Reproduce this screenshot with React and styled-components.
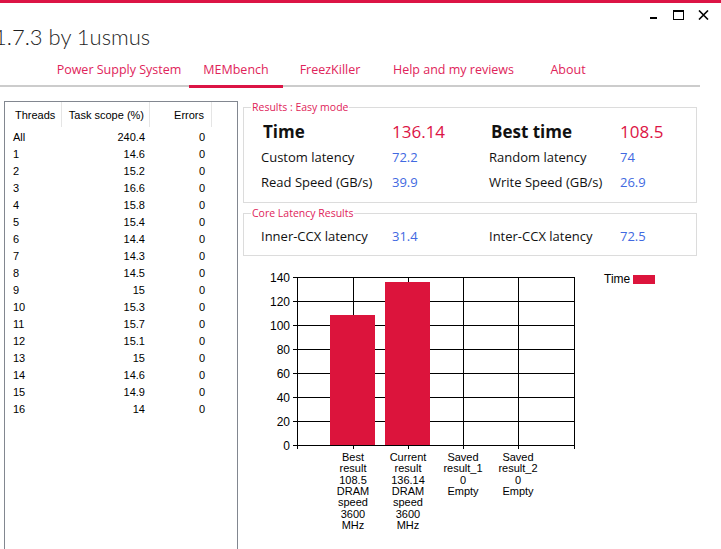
import React from 'react';
import styled, { createGlobalStyle } from 'styled-components';

const GlobalStyle = createGlobalStyle`
  html, body {
    margin: 0;
    padding: 0;
    background: #ffffff;
    overflow: hidden;
  }
  body {
    font-family: "Open Sans", "Noto Sans", sans-serif;
    color: #1a1a1a;
  }
`;

const Window = styled.div`
  width: 721px;
  height: 549px;
  overflow: hidden;
  border-top: 3px solid #dc1445;
  box-sizing: border-box;
`;

const TitleBar = styled.div`
  display: flex;
  justify-content: space-between;
  align-items: flex-start;
  height: 52px;
`;

const Title = styled.h1`
  margin: 19px 0 0 -6px;
  font-family: Lato, "Open Sans", sans-serif;
  font-size: 22px;
  font-weight: 300;
  line-height: 30px;
  color: #1f1f1f;
  white-space: nowrap;
`;

const Controls = styled.div`
  display: flex;
  align-items: center;
  margin: 6px 5px 0 0;
`;

const ControlButton = styled.div`
  width: 25px;
  height: 12px;
  display: flex;
  align-items: center;
  justify-content: center;
`;

const TabStrip = styled.nav`
  display: flex;
  width: 700px;
  height: 30px;
  border-bottom: 2px solid #cccccc;
`;

const Tab = styled.div`
  position: relative;
  width: ${p => p.$w}px;
  flex: none;
  display: flex;
  align-items: center;
  justify-content: center;
  padding-bottom: 1px;
  box-sizing: border-box;
  font-size: 12.5px;
  color: #e0245a;
  white-space: nowrap;

  &::after {
    content: '';
    display: ${p => (p.$active ? 'block' : 'none')};
    position: absolute;
    left: 0;
    right: 0;
    bottom: -3px;
    height: 3px;
    background: #dc1445;
  }
`;

const Main = styled.div`
  display: flex;
  align-items: flex-start;
  gap: 5px;
  padding: 14px 0 0 4px;
`;

const ThreadPanel = styled.div`
  width: 234px;
  height: 470px;
  box-sizing: border-box;
  border: 1px solid #828790;
  border-bottom: none;
  font-family: "Liberation Sans", Arial, sans-serif;
  font-size: 11px;
  color: #000;
`;

const TableRow = styled.div`
  display: grid;
  grid-template-columns: 57px 88px 62px;
  height: ${p => (p.$head ? 25 : 17)}px;
  align-items: center;
  margin-bottom: ${p => (p.$head ? 1 : 0)}px;
`;

const Cell = styled.div`
  height: 100%;
  display: flex;
  align-items: center;
  justify-content: ${p => (p.$right ? 'flex-end' : 'flex-start')};
  padding: ${p => p.$pad};
  box-sizing: border-box;
  border-right: ${p => (p.$head ? '1px solid #e5e5e5' : 'none')};
`;

const RightPanel = styled.div`
  width: 454px;
  display: flex;
  flex-direction: column;
`;

const Group = styled.fieldset`
  margin: ${p => p.$top}px 0 0 0;
  padding: 0;
  border: 1px solid #dcdcdc;
  min-width: 0;

  legend {
    margin-left: 7px;
    padding: 0 1px;
    font-size: 10.5px;
    line-height: 13px;
    color: #e0245a;
  }
`;

const ResultGrid = styled.div`
  display: grid;
  grid-template-columns: 131px 97px 131px auto;
  grid-auto-rows: 25px;
  align-items: center;
  padding: ${p => p.$pad};
`;

const Label = styled.span`
  font-size: ${p => (p.$big ? 17 : 13)}px;
  font-weight: ${p => (p.$big ? 700 : 400)};
  color: #111;
  white-space: nowrap;
  padding-left: ${p => (p.$big ? 2 : 0)}px;
`;

const Value = styled.span`
  font-size: ${p => (p.$big ? 17 : 13)}px;
  color: ${p => (p.$big ? '#dc1445' : '#4169e1')};
  white-space: nowrap;
`;

const ChartSvg = styled.svg`
  display: block;
  margin-top: 6px;
  font-family: "Liberation Sans", Arial, sans-serif;
`;

const rows = [
  ['All', '240.4'], ['1', '14.6'], ['2', '15.2'], ['3', '16.6'], ['4', '15.8'],
  ['5', '15.4'], ['6', '14.4'], ['7', '14.3'], ['8', '14.5'], ['9', '15'],
  ['10', '15.3'], ['11', '15.7'], ['12', '15.1'], ['13', '15'], ['14', '14.6'],
  ['15', '14.9'], ['16', '14'],
];

const tabs = [
  { label: 'Power Supply System', w: 140 },
  { label: 'MEMbench', w: 94, active: true },
  { label: 'FreezKiller', w: 94 },
  { label: 'Help and my reviews', w: 153 },
  { label: 'About', w: 76 },
];

const bars = [
  { x: 353, value: 108.5, label: ['Best', 'result', '108.5', 'DRAM', 'speed', '3600', 'MHz'] },
  { x: 408, value: 136.14, label: ['Current', 'result', '136.14', 'DRAM', 'speed', '3600', 'MHz'] },
  { x: 463, value: 0, label: ['Saved', 'result_1', '0', 'Empty'] },
  { x: 518, value: 0, label: ['Saved', 'result_2', '0', 'Empty'] },
];

// plot area in page coordinates
const PL = 297, PR = 574, PT = 277, PB = 445, STEP = 24;

const Chart = () => (
  <ChartSvg width={458} height={285}>
    <g transform="translate(-243,-262)" shapeRendering="crispEdges">
      {[0, 1, 2, 3, 4, 5, 6, 7].map(i => (
        <g key={i}>
          <line x1={PL - 4} x2={PR} y1={PB - i * STEP + 0.5} y2={PB - i * STEP + 0.5} stroke="#000" />
          <text x={290} y={PB - i * STEP + 5} fontSize="12" textAnchor="end" fill="#000">{i * 20}</text>
        </g>
      ))}
      {[PL, 353, 408, 463, 518, PR].map(x => (
        <line key={x} x1={x + 0.5} x2={x + 0.5} y1={PT} y2={PB + 4} stroke="#000" />
      ))}
      {bars.map(b => b.value > 0 && (
        <rect key={b.x} x={b.x - 23} width={45} y={PB - b.value * 1.2} height={b.value * 1.2} fill="#dc143c" />
      ))}
      {bars.map(b => (
        <text key={'l' + b.x} x={b.x} fontSize="11" textAnchor="middle" fill="#000">
          {b.label.map((t, i) => (
            <tspan key={i} x={b.x} y={461 + i * 11.33}>{t}</tspan>
          ))}
        </text>
      ))}
      <text x={604} y={283} fontSize="12" fill="#000">Time</text>
      <rect x={633} y={275} width={22} height={9} fill="#dc143c" />
    </g>
  </ChartSvg>
);

export default function App() {
  return (
    <Window>
      <GlobalStyle />
      <TitleBar>
        <Title>1.7.3 by 1usmus</Title>
        <Controls>
          <ControlButton>
            <svg width="8" height="10" viewBox="0 0 8 10"><rect x="0" y="7" width="7" height="2" fill="#000" /></svg>
          </ControlButton>
          <ControlButton>
            <svg width="11" height="10" viewBox="0 0 11 10"><rect x="0.5" y="0.5" width="10" height="9" fill="none" stroke="#000" /><rect x="0" y="0" width="11" height="2" fill="#000" /></svg>
          </ControlButton>
          <ControlButton>
            <svg width="11" height="10" viewBox="0 0 11 10"><path d="M1 0.5 L10 9.5 M10 0.5 L1 9.5" stroke="#000" strokeWidth="1.6" /></svg>
          </ControlButton>
        </Controls>
      </TitleBar>

      <TabStrip>
        <Tab $w={49} />
        {tabs.map(t => (
          <Tab key={t.label} $w={t.w} $active={t.active}>{t.label}</Tab>
        ))}
      </TabStrip>

      <Main>
        <ThreadPanel>
          <TableRow $head>
            <Cell $head $pad="0 0 0 10px">Threads</Cell>
            <Cell $head $right $pad="0 5px 0 0">Task scope (%)</Cell>
            <Cell $head $right $pad="0 7px 0 0">Errors</Cell>
          </TableRow>
          {rows.map(([t, v]) => (
            <TableRow key={t}>
              <Cell $pad="0 0 0 8px">{t}</Cell>
              <Cell $right $pad="0 5px 0 0">{v}</Cell>
              <Cell $right $pad="0 7px 0 0">0</Cell>
            </TableRow>
          ))}
        </ThreadPanel>

        <RightPanel>
          <Group $top={0}>
            <legend>Results : Easy mode</legend>
            <ResultGrid $pad="5px 0 8px 17px">
              <Label $big>Time</Label>
              <Value $big>136.14</Value>
              <Label $big>Best time</Label>
              <Value $big>108.5</Value>
              <Label>Custom latency</Label>
              <Value>72.2</Value>
              <Label>Random latency</Label>
              <Value>74</Value>
              <Label>Read Speed (GB/s)</Label>
              <Value>39.9</Value>
              <Label>Write Speed (GB/s)</Label>
              <Value>26.9</Value>
            </ResultGrid>
          </Group>
          <Group $top={4}>
            <legend>Core Latency Results</legend>
            <ResultGrid $pad="3px 0 7px 17px">
              <Label>Inner-CCX latency</Label>
              <Value>31.4</Value>
              <Label>Inter-CCX latency</Label>
              <Value>72.5</Value>
            </ResultGrid>
          </Group>
          <Chart />
        </RightPanel>
      </Main>
    </Window>
  );
}
